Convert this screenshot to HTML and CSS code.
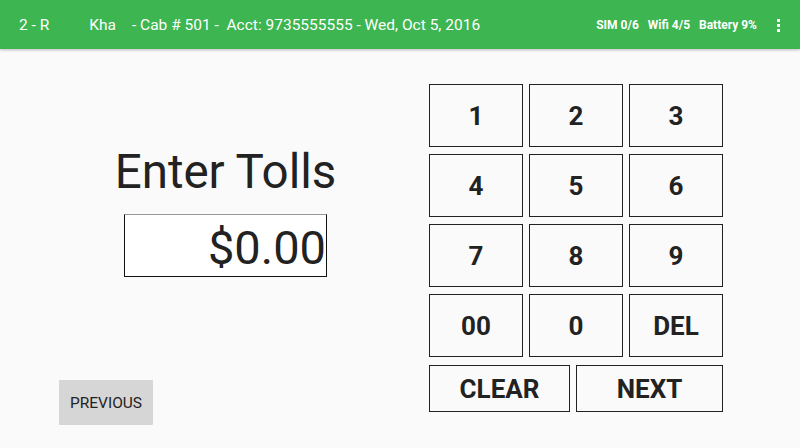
FILE: index.html
```html
<!DOCTYPE html>
<html lang="en">

<head>
  <meta charset="UTF-8">
  <meta name="viewport" content="width=device-width, initial-scale=1.0">
  <title>Enter Tolls</title>
  <link rel="stylesheet" href="styles.css">
</head>

<body>
  <header class="topbar">
    <span class="trip">2 - R</span>
    <span class="driver">Kha</span>
    <span class="cab">- Cab # 501 -&nbsp; Acct: 9735555555 - Wed, Oct 5, 2016</span>
    <div class="status">
      <span>SIM 0/6</span>
      <span>Wifi 4/5</span>
      <span>Battery 9%</span>
    </div>
    <div class="menu-dots">
      <i></i><i></i><i></i>
    </div>
  </header>

  <main class="screen">
    <section class="left-col">
      <div class="entry">
        <h1 class="title">Enter Tolls</h1>
        <div class="amount">$0.00</div>
      </div>
      <button class="btn-prev">PREVIOUS</button>
    </section>

    <section class="keypad">
      <div class="keys">
        <button class="key">1</button>
        <button class="key">2</button>
        <button class="key">3</button>
        <button class="key">4</button>
        <button class="key">5</button>
        <button class="key">6</button>
        <button class="key">7</button>
        <button class="key">8</button>
        <button class="key">9</button>
        <button class="key">00</button>
        <button class="key">0</button>
        <button class="key">DEL</button>
      </div>
      <div class="actions">
        <button class="key key-clear">CLEAR</button>
        <button class="key key-next">NEXT</button>
      </div>
    </section>
  </main>
</body>

</html>
```

FILE: styles.css
```css
* {
  box-sizing: border-box;
}

html,
body {
  height: 100%;
}

body {
  margin: 0;
  background-color: #fafafa; /* page background */
  font-family: Roboto, 'Noto Sans', sans-serif;
  color: #222;
  display: flex;
  flex-direction: column;
  overflow: hidden;
}

/* top green bar */
.topbar {
  height: 49px;
  flex-shrink: 0;
  background-color: #3db551;
  color: #fff;
  display: flex;
  align-items: center;
  padding: 1px 0 0 19px;
  font-size: 15.5px;
  box-shadow: 0 1px 3px rgba(0, 0, 0, 0.25);
  position: relative;
  z-index: 1;
}

.driver {
  margin-left: 40px;
}

.cab {
  margin-left: 16px;
}

.status {
  margin-left: auto;
  display: flex;
  gap: 9px;
  font-size: 12px;
  font-weight: bold;
}

.menu-dots {
  width: 43px;
  display: flex;
  flex-direction: column;
  align-items: center;
  gap: 2px;
}

.menu-dots i {
  width: 3px;
  height: 3px;
  background-color: #fff;
}

/* content */
.screen {
  flex: 1;
  display: flex;
}

.left-col {
  width: 429px;
  display: flex;
  flex-direction: column;
  padding: 100px 0 23px 22px;
}

.entry {
  display: flex;
  flex-direction: column;
  align-items: center;
}

.title {
  margin: 0;
  font-size: 47.5px;
  line-height: 1;
  font-weight: normal;
  color: #222;
}

.amount {
  margin-top: 17px;
  width: 203px;
  height: 63px;
  background-color: #fff;
  border: 1px solid #111;
  border-top-color: #999;
  padding-top: 9px;
  text-align: right;
  font-size: 47px;
  line-height: 1;
  color: #222;
}

.btn-prev {
  margin-top: auto;
  margin-left: 37px;
  align-self: flex-start;
  width: 94px;
  height: 45px;
  border: none;
  border-radius: 1px;
  background-color: #d6d6d6;
  font-family: Roboto, 'Noto Sans', sans-serif;
  font-size: 15.5px;
  color: #222;
  padding: 0;
}

/* keypad */
.keypad {
  padding-top: 35px;
  width: 294px;
}

.keys {
  display: grid;
  grid-template-columns: repeat(3, 94px);
  grid-auto-rows: 63px;
  column-gap: 6px;
  row-gap: 7px;
}

.key {
  border: 1px solid #222;
  background-color: #fafafa;
  font-family: Roboto, 'Noto Sans', sans-serif;
  font-weight: bold;
  font-size: 26px;
  color: #222;
  padding: 0;
}

.actions {
  margin-top: 8px;
  display: flex;
  gap: 6px;
  height: 47px;
}

.key-clear {
  width: 141px;
}

.key-next {
  flex: 1;
}
```
